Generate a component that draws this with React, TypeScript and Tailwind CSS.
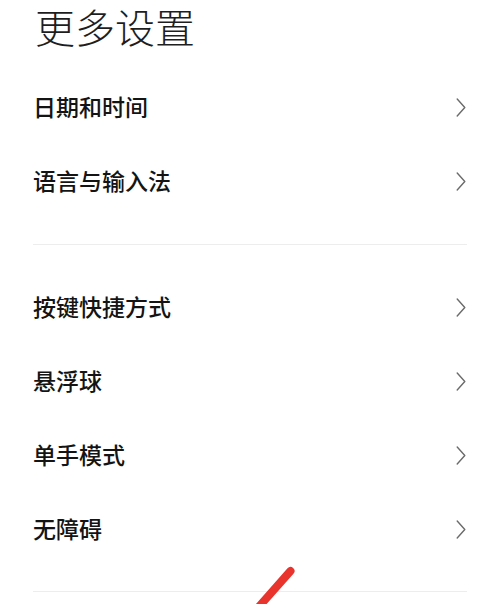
import React from "react";

const Chevron = () => (
  <svg width="10" height="19" viewBox="0 0 10 19" fill="none" className="shrink-0">
    <path d="M1.2 1 L8.8 9.5 L1.2 18" stroke="#6b6b6b" strokeWidth="1.4" strokeLinecap="round" strokeLinejoin="round" />
  </svg>
);

const Row = ({ label }: { label: string }) => (
  <div className="flex h-[74px] items-center justify-between pl-[33px] pr-[34px]">
    <span className="text-[23px] leading-[1.3] font-medium text-[#141414]">{label}</span>
    <Chevron />
  </div>
);

export default function App() {
  return (
    <div
      className="relative h-[604px] w-[500px] overflow-hidden bg-white"
      style={{ fontFamily: '"Noto Sans CJK SC", "Noto Sans", sans-serif' }}
    >
      <div className="flex h-[52px] items-center pl-[35px]">
        <span className="text-[40px] leading-[1.25] font-light text-[#1e1e1e]">更多设置</span>
      </div>
      <div className="h-[18px]" />
      <Row label="日期和时间" />
      <Row label="语言与输入法" />
      <div className="h-[26px]" />
      <div className="mx-[33px] h-px bg-[#ededed]" />
      <div className="h-[25px]" />
      <Row label="按键快捷方式" />
      <Row label="悬浮球" />
      <Row label="单手模式" />
      <Row label="无障碍" />
      <div className="h-[25px]" />
      <div className="mx-[33px] h-px bg-[#ededed]" />
      <svg className="absolute left-0 top-0" width="500" height="604" viewBox="0 0 500 604">
        <path d="M290.5 571 L256 610" stroke="#e8342c" strokeWidth="8" strokeLinecap="round" />
      </svg>
    </div>
  );
}
